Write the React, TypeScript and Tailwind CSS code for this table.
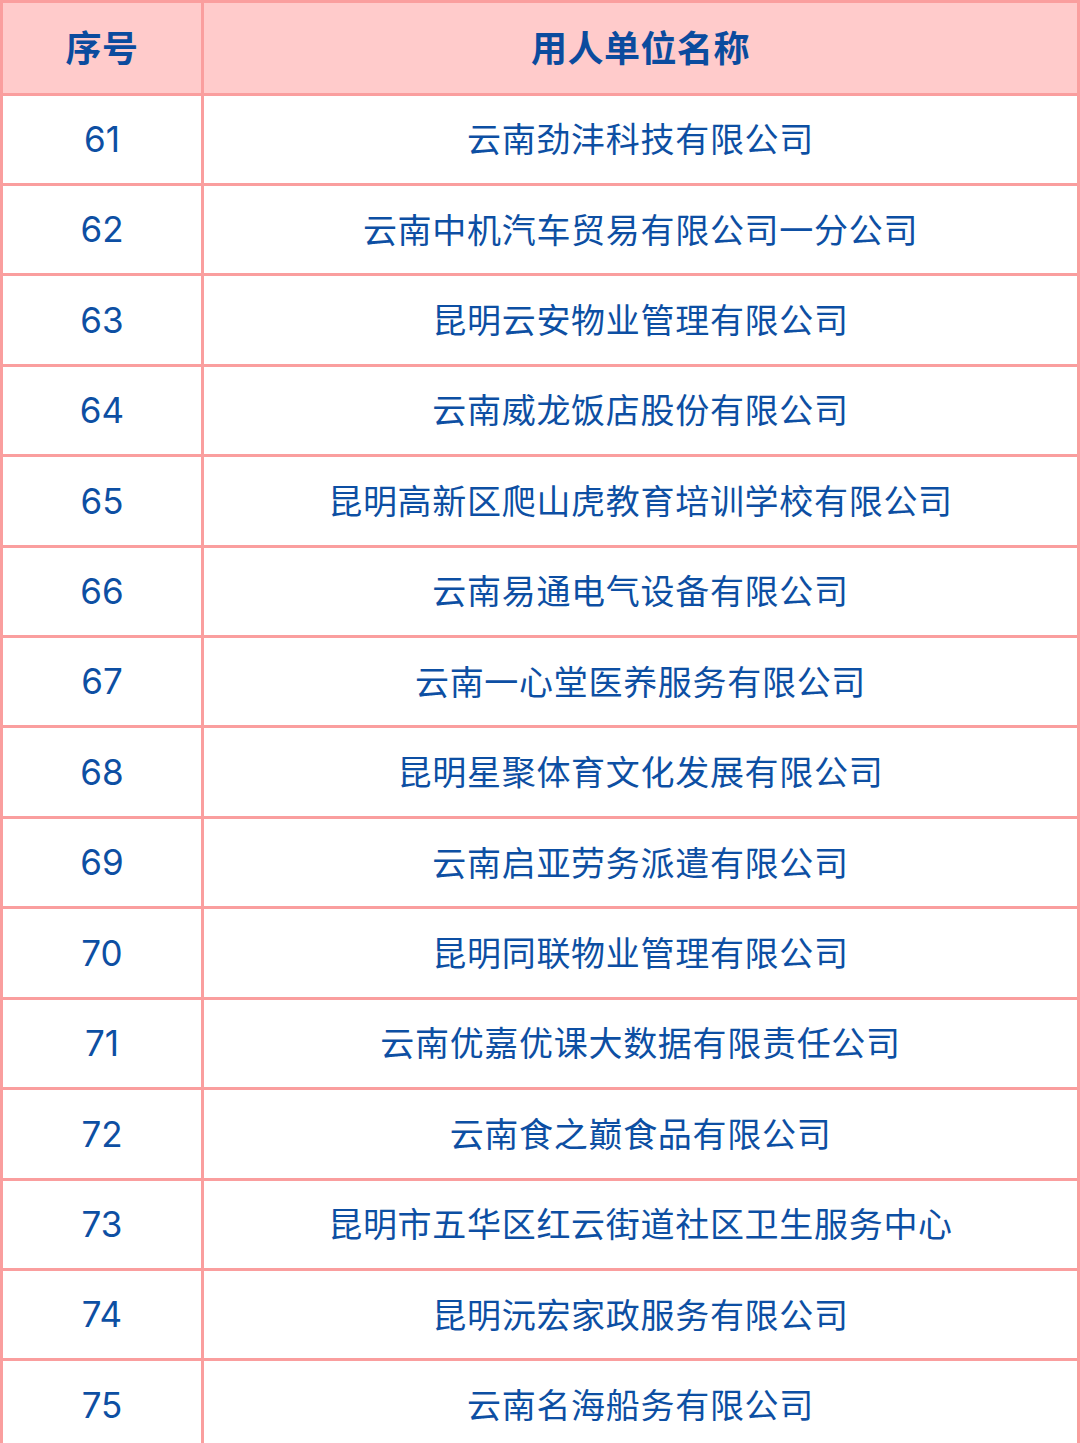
import React from "react";

const rows: [string, string][] = [
  ["61", "云南劲沣科技有限公司"],
  ["62", "云南中机汽车贸易有限公司一分公司"],
  ["63", "昆明云安物业管理有限公司"],
  ["64", "云南威龙饭店股份有限公司"],
  ["65", "昆明高新区爬山虎教育培训学校有限公司"],
  ["66", "云南易通电气设备有限公司"],
  ["67", "云南一心堂医养服务有限公司"],
  ["68", "昆明星聚体育文化发展有限公司"],
  ["69", "云南启亚劳务派遣有限公司"],
  ["70", "昆明同联物业管理有限公司"],
  ["71", "云南优嘉优课大数据有限责任公司"],
  ["72", "云南食之巅食品有限公司"],
  ["73", "昆明市五华区红云街道社区卫生服务中心"],
  ["74", "昆明沅宏家政服务有限公司"],
  ["75", "云南名海船务有限公司"],
];

const cjk = { fontFamily: '"Noto Sans CJK SC", "Noto Sans", sans-serif' };
const num = { fontFamily: 'Inter, "Noto Sans", sans-serif' };

export default function App() {
  return (
    <div className="w-[1080px] h-[1443px] overflow-hidden bg-white">
      <div className="border-[3px] border-[#fa9e9e] border-b-0">
        <div className="grid grid-cols-[198px_1fr] h-[92.5px] bg-[#ffcbcb] border-b-[3px] border-[#fa9e9e]">
          <div
            className="flex items-center justify-center pb-[4px] text-[36px] font-bold text-[#0b4b9e] tracking-[0.5px]"
            style={cjk}
          >
            序号
          </div>
          <div
            className="flex items-center justify-center pb-[4px] border-l-[3px] border-[#fa9e9e] text-[36px] font-bold text-[#0b4b9e] tracking-[0.5px]"
            style={cjk}
          >
            用人单位名称
          </div>
        </div>
        {rows.map(([n, name]) => (
          <div
            key={n}
            className="grid grid-cols-[198px_1fr] h-[90.43px] border-b-[3px] border-[#fa9e9e]"
          >
            <div
              className="flex items-center justify-center text-[35px] text-[#0d4fa3]"
              style={num}
            >
              {n}
            </div>
            <div
              className="flex items-center justify-center pb-[3px] border-l-[3px] border-[#fa9e9e] text-[34px] text-[#0d4fa3] tracking-[0.7px]"
              style={cjk}
            >
              {name}
            </div>
          </div>
        ))}
      </div>
    </div>
  );
}
